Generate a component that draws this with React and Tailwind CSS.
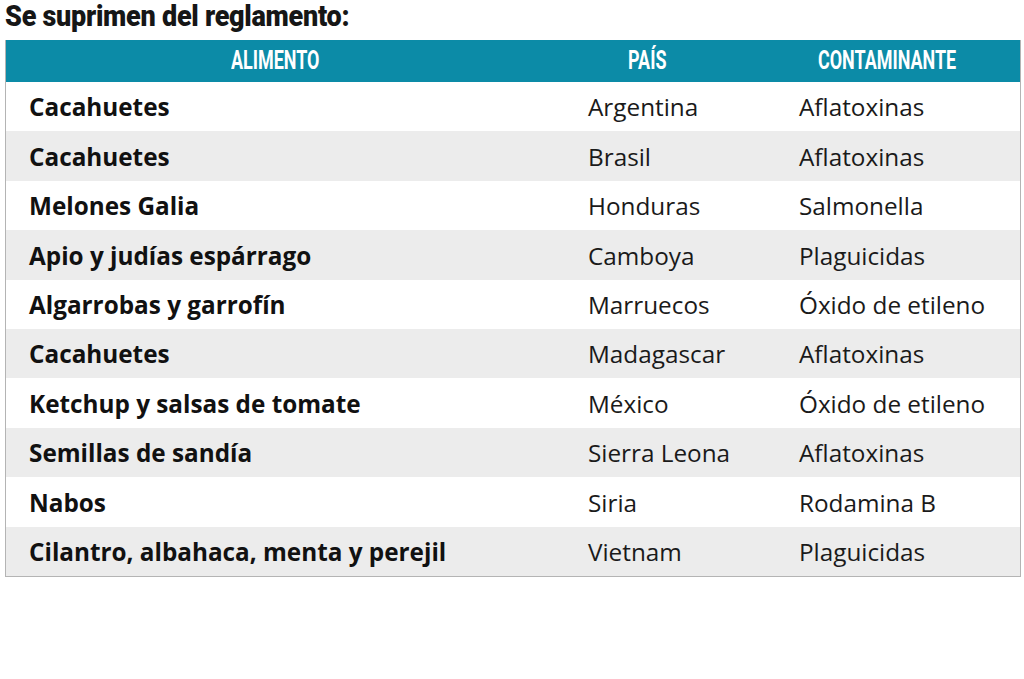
const rows = [
  ['Cacahuetes', 'Argentina', 'Aflatoxinas'],
  ['Cacahuetes', 'Brasil', 'Aflatoxinas'],
  ['Melones Galia', 'Honduras', 'Salmonella'],
  ['Apio y judías espárrago', 'Camboya', 'Plaguicidas'],
  ['Algarrobas y garrofín', 'Marruecos', 'Óxido de etileno'],
  ['Cacahuetes', 'Madagascar', 'Aflatoxinas'],
  ['Ketchup y salsas de tomate', 'México', 'Óxido de etileno'],
  ['Semillas de sandía', 'Sierra Leona', 'Aflatoxinas'],
  ['Nabos', 'Siria', 'Rodamina B'],
  ['Cilantro, albahaca, menta y perejil', 'Vietnam', 'Plaguicidas'],
]

export default function App() {
  return (
    <div className="w-[1024px] h-[679px] bg-white font-['Open_Sans',sans-serif] text-[#111]">
      <h1 className="pl-[5px] h-[40px]">
        <span className="inline-block origin-left scale-x-[0.9] font-['Roboto',sans-serif] font-black text-[30px] leading-[32px] tracking-[-0.3px] text-[#161616] whitespace-nowrap">
          Se suprimen del reglamento:
        </span>
      </h1>

      <div className="ml-[5px] w-[1016px] border border-[#b4b4b4] border-t-0">
        <div className="grid grid-cols-[559px_211px_1fr] h-[42px] bg-[#0c8ba7] items-center text-white">
          <div className="pl-[225px]"><HeadText>ALIMENTO</HeadText></div>
          <div className="pl-[63px]"><HeadText>PAÍS</HeadText></div>
          <div className="pl-[42px]"><HeadText>CONTAMINANTE</HeadText></div>
        </div>
        {rows.map(([food, country, pollutant], i) => (
          <div
            key={i}
            className={`grid grid-cols-[559px_211px_1fr] h-[49.4px] items-center text-[24.3px] ${i % 2 ? 'bg-[#ececec]' : 'bg-white'}`}
          >
            <div className="pl-[23px] pt-[2px] font-bold whitespace-nowrap">{food}</div>
            <div className="pl-[23px] pt-[2px] whitespace-nowrap text-[#1a1a1a]">{country}</div>
            <div className="pl-[23px] pt-[2px] whitespace-nowrap text-[#1a1a1a]">{pollutant}</div>
          </div>
        ))}
      </div>
    </div>
  )
}

function HeadText({ children }) {
  return (
    <span className="inline-block origin-left scale-x-[0.69] font-['Roboto',sans-serif] font-bold text-[26px] leading-none whitespace-nowrap">
      {children}
    </span>
  )
}
